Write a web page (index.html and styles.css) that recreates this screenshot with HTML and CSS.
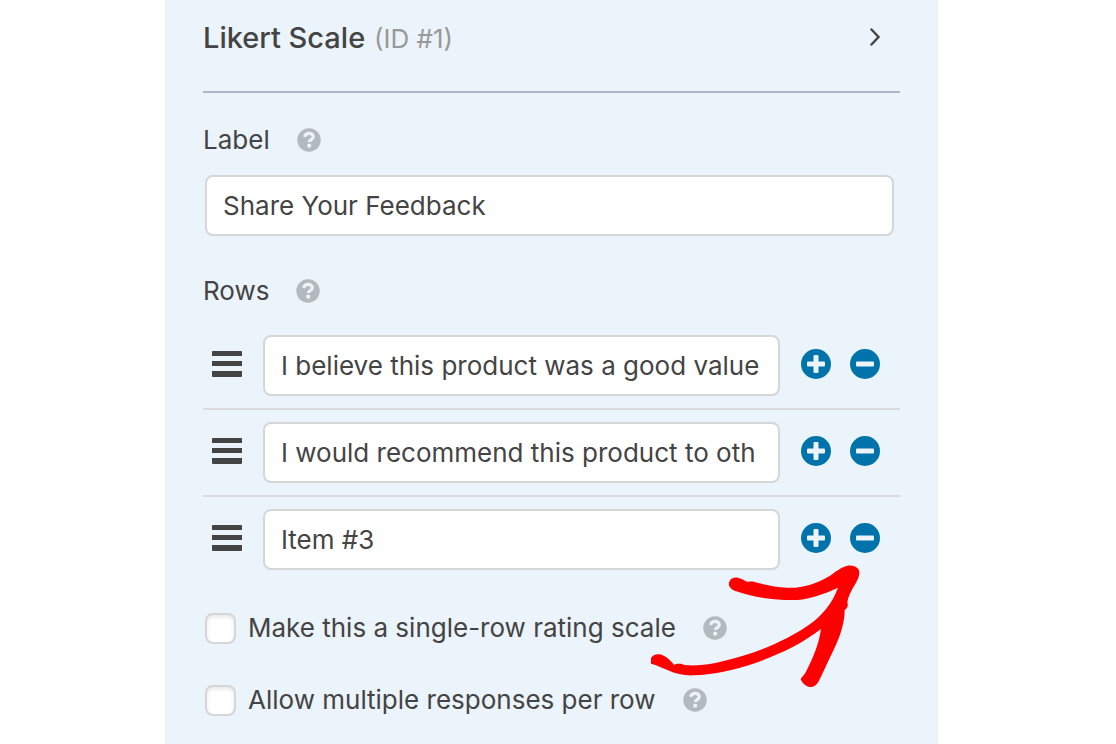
FILE: index.html
```html
<!DOCTYPE html>
<html lang="en">
<head>
    <meta charset="utf-8">
    <title>Likert Scale field options</title>
    <link rel="stylesheet" href="styles.css">
</head>
<body>
    <svg class="sprite" aria-hidden="true">
        <symbol id="icon-help" viewBox="0 0 24 24">
            <circle cx="12" cy="12" r="11.7" fill="#b3b9bd"/>
            <path d="M7.4 8.8C8.4 6.5 9.9 5.4 12.1 5.4c2.4 0 4.2 1.4 4.2 3.4 0 2.8-4 2.7-4 5.2" fill="none" stroke="#ebf3fb" stroke-width="3.2"/>
            <rect x="10.3" y="15.7" width="3.8" height="3.8" rx="1" fill="#ebf3fb"/>
        </symbol>
        <symbol id="icon-drag" viewBox="0 0 30 26">
            <path d="M1 0h28a1 1 0 0 1 1 1v4H0V1a1 1 0 0 1 1-1zM0 10h30v5H0zM0 20h30v5a1 1 0 0 1-1 1H1a1 1 0 0 1-1-1z" fill="#444"/>
        </symbol>
        <symbol id="icon-plus" viewBox="0 0 30 30">
            <circle cx="15" cy="15" r="15" fill="#0073aa"/>
            <rect x="6" y="12.5" width="18" height="5" rx="1" fill="#ebf3fb"/>
            <rect x="12.5" y="6" width="5" height="18" rx="1" fill="#ebf3fb"/>
        </symbol>
        <symbol id="icon-minus" viewBox="0 0 30 30">
            <circle cx="15" cy="15" r="15" fill="#0073aa"/>
            <rect x="6" y="12.5" width="18" height="5" rx="1" fill="#ebf3fb"/>
        </symbol>
    </svg>

    <form class="panel">
        <div class="panel-header">
            <h1>Likert Scale <span>(ID #1)</span></h1>
            <button type="button" class="toggle" aria-label="Toggle field options">
                <svg width="12" height="18" viewBox="0 0 12 18"><path d="M1.5 1.5L8.5 9l-7 7.5" fill="none" stroke="#444" stroke-width="2.4" stroke-linecap="round"/></svg>
            </button>
        </div>

        <div class="label-line">
            <label for="field-label">Label</label>
            <button type="button" class="help" aria-label="Help"><svg><use href="#icon-help"/></svg></button>
        </div>
        <div class="field">
            <input type="text" class="text-input" id="field-label" value="Share Your Feedback">
        </div>

        <div class="label-line rows-label">
            <span id="rows-label">Rows</span>
            <button type="button" class="help" aria-label="Help"><svg><use href="#icon-help"/></svg></button>
        </div>
        <ul class="rows" aria-labelledby="rows-label">
            <li>
                <svg class="drag"><use href="#icon-drag"/></svg>
                <input type="text" class="text-input" aria-label="Row 1" value="I believe this product was a good value">
                <div class="actions">
                    <button type="button" aria-label="Add row"><svg><use href="#icon-plus"/></svg></button>
                    <button type="button" aria-label="Remove row"><svg><use href="#icon-minus"/></svg></button>
                </div>
            </li>
            <li>
                <svg class="drag"><use href="#icon-drag"/></svg>
                <input type="text" class="text-input" aria-label="Row 2" value="I would recommend this product to oth">
                <div class="actions">
                    <button type="button" aria-label="Add row"><svg><use href="#icon-plus"/></svg></button>
                    <button type="button" aria-label="Remove row"><svg><use href="#icon-minus"/></svg></button>
                </div>
            </li>
            <li>
                <svg class="drag"><use href="#icon-drag"/></svg>
                <input type="text" class="text-input" aria-label="Row 3" value="Item #3">
                <div class="actions">
                    <button type="button" aria-label="Add row"><svg><use href="#icon-plus"/></svg></button>
                    <button type="button" aria-label="Remove row"><svg><use href="#icon-minus"/></svg></button>
                </div>
                <!-- hand drawn arrow pointing at the remove button -->
                <svg class="arrow" viewBox="30 190 636 372" aria-hidden="true">
                    <path fill="#f00" d="M33 472C38 463 48 459 59 461C76 465 89 477 103 493C111 488 124 489 133 493C172 497 211 492 248 482C347 459 437 421 505 374C543 348 576 311 594 261C553 280 512 294 472 298C416 300 344 292 284 270C270 265 263 254 268 243C272 233 282 229 293 231C304 232 313 240 324 244C330 242 337 243 344 244C376 253 408 259 441 261C485 263 528 251 570 225C588 212 605 199 622 195C643 191 660 202 658 219C656 236 644 252 638 263C632 275 624 289 622 305C625 313 623 322 614 328C614 376 594 423 571 468C558 494 548 519 535 544C529 554 520 560 509 559C497 557 487 548 482 535C486 527 493 523 498 513C518 475 537 430 543 385C482 432 413 463 346 487C286 508 222 522 161 524C133 525 107 520 84 509C67 501 51 494 33 489Z"/>
                </svg>
            </li>
        </ul>

        <div class="check-line">
            <input type="checkbox" id="single-row">
            <label for="single-row">Make this a single-row rating scale</label>
            <button type="button" class="help" aria-label="Help"><svg><use href="#icon-help"/></svg></button>
        </div>
        <div class="check-line">
            <input type="checkbox" id="multiple">
            <label for="multiple">Allow multiple responses per row</label>
            <button type="button" class="help" aria-label="Help"><svg><use href="#icon-help"/></svg></button>
        </div>
    </form>
</body>
</html>
```
FILE: styles.css
```css
* {
    box-sizing: border-box;
}
body {
    margin: 0;
    padding: 0 178px 0 165px;
    background-color: #fff;
    color: #444;
    font-family: Inter, "Liberation Sans", sans-serif;
    font-size: 26px;
    line-height: 32px;
}
.sprite {
    display: none;
}
button {
    padding: 0;
    border: none;
    background: none;
    cursor: pointer;
}
svg {
    display: block;
}
.panel {
    min-height: 100vh;
    padding: 0 38px 27px;
    background-color: #ebf3fb;
}
.panel-header {
    display: flex;
    justify-content: space-between;
    align-items: center;
    padding: 17px 18px 31px 0;
    border-bottom: 2px solid #b0b6c3;
}
.toggle {
    padding-bottom: 4px;
}
h1 {
    margin: 0;
    font-size: 29px;
    font-weight: 500;
    line-height: 42px;
}
h1 span {
    margin-left: 1px;
    color: #999;
    font-size: 26px;
    font-weight: 400;
}
.label-line,
.check-line {
    display: flex;
    align-items: center;
}
.label-line {
    padding: 31px 0 19px;
}
.rows-label {
    padding: 39px 0 16px;
}
.help {
    margin-left: 27px;
}
.help svg {
    width: 24px;
    height: 24px;
}
.field {
    padding: 0 6px 0 2px;
}
.text-input {
    display: block;
    flex: 1;
    width: 100%;
    min-width: 0;
    height: 61px;
    padding: 0 14px 0 16px;
    border: 2px solid #d6d6d6;
    border-radius: 8px;
    background-color: #fff;
    color: #444;
    font: inherit;
}
.rows {
    margin: 0;
    padding: 0;
    list-style: none;
}
.rows li {
    position: relative;
    display: flex;
    align-items: center;
    gap: 21px;
    padding: 12px 20px 12px 9px;
}
.rows li + li {
    border-top: 2px solid #d9dbde;
}
.drag {
    width: 30px;
    height: 30px;
    padding-bottom: 4px;
}
.actions {
    display: flex;
    gap: 19px;
    padding-bottom: 4px;
}
.actions svg {
    width: 30px;
    height: 30px;
}
.arrow {
    position: absolute;
    top: 67px;
    right: 38px;
    width: 212px;
    height: 124px;
    pointer-events: none;
}
.check-line {
    margin-top: 40px;
}
.rows + .check-line {
    margin-top: 30px;
}
.check-line input {
    appearance: none;
    width: 31px;
    height: 31px;
    margin: 0 12px 0 2px;
    border: 2px solid #d6d6d6;
    border-radius: 8px;
    background-color: #fff;
    box-shadow: inset 0 2px 4px rgba(0, 0, 0, 0.1);
}
```
